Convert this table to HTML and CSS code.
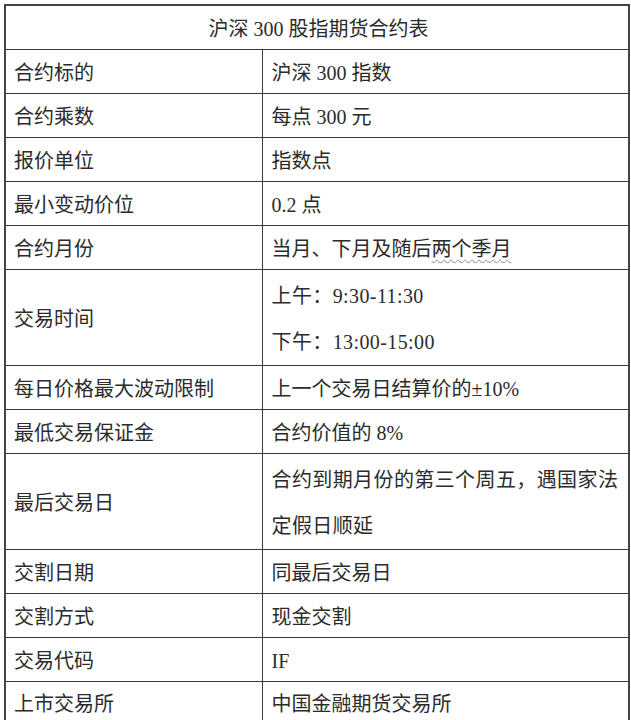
FILE: index.html
```html
<!DOCTYPE html>
<html lang="zh-CN">
<head>
<meta charset="utf-8">
<title>沪深300股指期货合约表</title>
<link rel="stylesheet" href="styles.css">
</head>
<body>
<div class="page">
<table class="spec">
  <colgroup><col class="c1"><col class="c2"></colgroup>
  <tr class="title"><td colspan="2">沪深 300 股指期货合约表</td></tr>
  <tr><td class="k">合约标的</td><td class="v">沪深 300 指数</td></tr>
  <tr><td class="k">合约乘数</td><td class="v">每点 300 元</td></tr>
  <tr><td class="k">报价单位</td><td class="v">指数点</td></tr>
  <tr><td class="k">最小变动价位</td><td class="v">0.2 点</td></tr>
  <tr><td class="k">合约月份</td><td class="v">当月、下月及随后<span class="wavy">两个季月</span></td></tr>
  <tr class="tall"><td class="k">交易时间</td><td class="v multi">上午：9:30-11:30<br>下午：13:00-15:00</td></tr>
  <tr><td class="k">每日价格最大波动限制</td><td class="v">上一个交易日结算价的±10%</td></tr>
  <tr><td class="k">最低交易保证金</td><td class="v">合约价值的 8%</td></tr>
  <tr class="tall2"><td class="k">最后交易日</td><td class="v multi">合约到期月份的第三个周五，遇国家法<br>定假日顺延</td></tr>
  <tr><td class="k">交割日期</td><td class="v">同最后交易日</td></tr>
  <tr><td class="k">交割方式</td><td class="v">现金交割</td></tr>
  <tr><td class="k">交易代码</td><td class="v">IF</td></tr>
  <tr><td class="k">上市交易所</td><td class="v">中国金融期货交易所</td></tr>
</table>
</div>
</body>
</html>
```
FILE: styles.css
```css
html, body {
  margin: 0;
  padding: 0;
  background: #ffffff;
}

.page {
  padding: 4px 0 0 4px;
}

.spec {
  width: 624px;
  border-collapse: collapse;
  border: 2px solid #444;
  font-family: "Liberation Serif", "Noto Sans CJK SC", serif;
  font-size: 20px;
  color: #2b2b2b;
  table-layout: fixed;
}

.spec col.c1 {
  width: 257px;
}

.spec col.c2 {
  width: 367px;
}

.spec td {
  border: 1px solid #3a3a3a;
  height: 44px;
  padding: 3px 6px 0 9px;
  vertical-align: middle;
  line-height: 24px;
  box-sizing: border-box;
  white-space: nowrap;
}

.spec td.k {
  padding-left: 8px;
}

.spec tr.title td {
  height: 44px;
  text-align: center;
}

.spec tr.tall td {
  height: 95px;
}

.spec tr.tall2 td {
  height: 90px;
}

.spec td.multi {
  line-height: 46px;
  padding-top: 3px;
  letter-spacing: 0.4px;
}

.wavy {
  text-decoration: underline wavy #8a8a8a;
  text-decoration-thickness: 1px;
  text-underline-offset: 3px;
}
```
